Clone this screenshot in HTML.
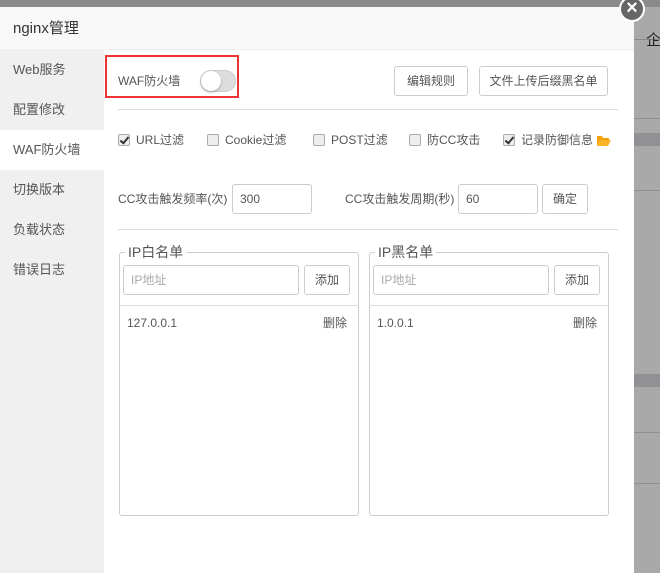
<!DOCTYPE html><html><head><meta charset="utf-8"><style>
*{box-sizing:border-box;margin:0;padding:0}
body{width:660px;height:573px;overflow:hidden;position:relative;background:#a9a9a9;font-family:"Liberation Sans","Noto Sans CJK SC",sans-serif;font-size:12px;line-height:16px;color:#555}
.a{position:absolute;white-space:nowrap}
.btn{position:absolute;border:1px solid #ccc;border-radius:3px;background:#fff;text-align:center;color:#555;font-size:12px}
.inp{position:absolute;border:1px solid #ccc;border-radius:3px;background:#fff;padding-left:7px;color:#555}
.cb{display:inline-block;width:12px;height:12px;border:1px solid #aaa;border-radius:2px;background:#eee;vertical-align:-2px;margin-right:6px;position:relative}
.cb.on::after{content:"";position:absolute;left:3px;top:0px;width:3px;height:7px;border:solid #333;border-width:0 2px 2px 0;transform:rotate(40deg)}
.side div{height:40px;line-height:40px;padding-left:13px;color:#555;font-size:13px}
.fs{position:absolute;border:1px solid #ccc;border-radius:3px}
</style></head><body>
<div class="a" style="left:0;top:0;width:660px;height:7px;background:#8a8a8a"></div>
<div class="a" style="left:634px;top:39px;width:26px;height:1px;background:#888"></div>
<div class="a" style="left:634px;top:118px;width:26px;height:1px;background:#8f8f8f"></div>
<div class="a" style="left:634px;top:133px;width:26px;height:13px;background:#909095"></div>
<div class="a" style="left:634px;top:190px;width:26px;height:1px;background:#8f8f8f"></div>
<div class="a" style="left:634px;top:374px;width:26px;height:13px;background:#909095"></div>
<div class="a" style="left:634px;top:432px;width:26px;height:1px;background:#8f8f8f"></div>
<div class="a" style="left:634px;top:483px;width:26px;height:1px;background:#8f8f8f"></div>
<div class="a" style="left:646px;top:33px;font-size:15px;color:#222">企</div>
<div class="a" style="left:0;top:7px;width:634px;height:566px;background:#fff"></div>
<div class="a" style="left:0;top:7px;width:634px;height:43px;background:#f8f8f8;border-bottom:1px solid #eee;padding-left:13px;line-height:43px;font-size:15px;color:#333">nginx管理</div>
<div class="a side" style="left:0;top:50px;width:104px;height:523px;background:#f0f0f0">
<div>Web服务</div><div>配置修改</div><div style="background:#fff">WAF防火墙</div><div>切换版本</div><div>负载状态</div><div>错误日志</div></div>
<div class="a" style="left:619px;top:-4px;width:26px;height:26px;border-radius:50%;background:#666;border:2px solid #fff;color:#fff;text-align:center;line-height:20px;font-size:20px;font-weight:bold">×</div>
<div class="a" style="left:105px;top:55px;width:134px;height:43px;border:2px solid #e33"></div>
<div class="a" style="left:118px;top:73px">WAF防火墙</div>
<div class="a" style="left:200px;top:70px;width:36px;height:22px;border-radius:11px;background:#ddd;border:1px solid #ccc"><div style="width:20px;height:20px;border-radius:50%;background:#fff;box-shadow:0 1px 2px #999"></div></div>
<div class="btn" style="left:394px;top:66px;width:74px;height:30px;line-height:28px">编辑规则</div>
<div class="btn" style="left:479px;top:66px;width:129px;height:30px;line-height:28px">文件上传后缀黑名单</div>
<div class="a" style="left:118px;top:109px;width:500px;height:1px;background:#ddd"></div>
<div class="a" style="left:118px;top:132px"><span class="cb on"></span>URL过滤</div>
<div class="a" style="left:207px;top:132px"><span class="cb"></span>Cookie过滤</div>
<div class="a" style="left:313px;top:132px"><span class="cb"></span>POST过滤</div>
<div class="a" style="left:409px;top:132px"><span class="cb"></span>防CC攻击</div>
<div class="a" style="left:503px;top:132px"><span class="cb on"></span>记录防御信息</div>
<svg class="a" style="left:596px;top:134px" width="16" height="13"><path d="M1 2h5l1 2h6v2H4L1 12z" fill="#f4a10c"/><path d="M4 6h11l-3 6H1z" fill="#fbb426"/></svg>
<div class="a" style="left:118px;top:191px">CC攻击触发频率(次)</div>
<div class="inp" style="left:232px;top:184px;width:80px;height:30px;line-height:28px">300</div>
<div class="a" style="left:345px;top:191px">CC攻击触发周期(秒)</div>
<div class="inp" style="left:458px;top:184px;width:80px;height:30px;line-height:28px">60</div>
<div class="btn" style="left:542px;top:184px;width:46px;height:30px;line-height:28px">确定</div>
<div class="a" style="left:118px;top:229px;width:500px;height:1px;background:#ddd"></div>
<div class="fs" style="left:119px;top:252px;width:240px;height:264px"></div>
<div class="a" style="left:125px;top:244px;background:#fff;padding:0 3px;font-size:14px;color:#555">IP白名单</div>
<div class="inp" style="left:123px;top:265px;width:176px;height:30px;line-height:28px;color:#aaa">IP地址</div>
<div class="btn" style="left:304px;top:265px;width:46px;height:30px;line-height:28px">添加</div>
<div class="a" style="left:119px;top:305px;width:240px;height:1px;background:#ddd"></div>
<div class="a" style="left:127px;top:315px">127.0.0.1</div>
<div class="a" style="left:323px;top:315px">删除</div>
<div class="fs" style="left:369px;top:252px;width:240px;height:264px"></div>
<div class="a" style="left:375px;top:244px;background:#fff;padding:0 3px;font-size:14px;color:#555">IP黑名单</div>
<div class="inp" style="left:373px;top:265px;width:176px;height:30px;line-height:28px;color:#aaa">IP地址</div>
<div class="btn" style="left:554px;top:265px;width:46px;height:30px;line-height:28px">添加</div>
<div class="a" style="left:369px;top:305px;width:240px;height:1px;background:#ddd"></div>
<div class="a" style="left:377px;top:315px">1.0.0.1</div>
<div class="a" style="left:573px;top:315px">删除</div>
</body></html>
